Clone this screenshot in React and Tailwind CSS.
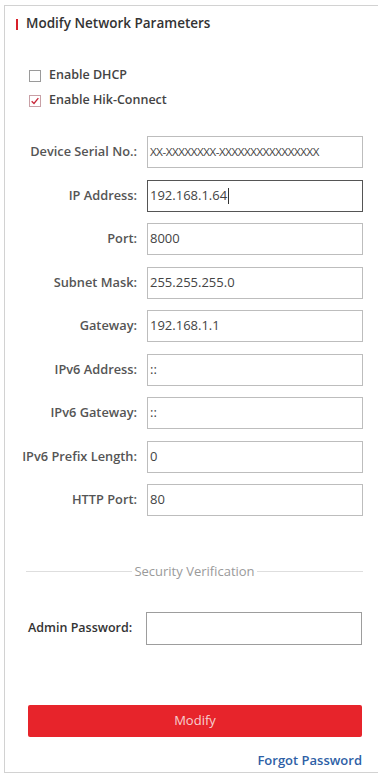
import React from 'react';

const fields = [
  { label: 'Device Serial No.:', value: 'XX-XXXXXXXX-XXXXXXXXXXXXXXXX', small: true },
  { label: 'IP Address:', value: '192.168.1.64', focused: true },
  { label: 'Port:', value: '8000' },
  { label: 'Subnet Mask:', value: '255.255.255.0' },
  { label: 'Gateway:', value: '192.168.1.1' },
  { label: 'IPv6 Address:', value: '::' },
  { label: 'IPv6 Gateway:', value: '::' },
  { label: 'IPv6 Prefix Length:', value: '0' },
  { label: 'HTTP Port:', value: '80' },
];

const Checkbox = ({ checked, label }) => (
  <div className="flex items-center h-[25px]">
    <div
      className={`w-[12px] h-[12px] border flex items-center justify-center ${
        checked ? 'border-[#c8a0a6]' : 'border-[#9a9a9a]'
      }`}
    >
      {checked && (
        <svg viewBox="0 0 12 12" className="w-[10px] h-[10px]">
          <path d="M2 6.2 L4.8 9 L10 2.6" fill="none" stroke="#c8283a" strokeWidth="1.6" />
        </svg>
      )}
    </div>
    <span className="ml-[8px] text-[12.5px] font-semibold text-[#444]">{label}</span>
  </div>
);

export default function App() {
  return (
    <div className="bg-white w-[378px] h-[776px] pt-[5px] pl-[4px]" style={{ fontFamily: '"Open Sans", "Liberation Sans", sans-serif' }}>
      <div className="h-[768px] border-l border-t border-b border-[#d2d2d2] flex flex-col">
        {/* header */}
        <div className="flex items-center pt-[10px] pl-[11px] h-[26px]">
          <div className="w-[2px] h-[11px] bg-[#d8202a]" />
          <span className="ml-[8px] text-[13.5px] font-semibold text-[#333] leading-none">
            Modify Network Parameters
          </span>
        </div>

        <div className="mt-[31px] pl-[24px]">
          <Checkbox label="Enable DHCP" />
          <Checkbox label="Enable Hik-Connect" checked />
        </div>

        {/* fields */}
        <div className="mt-[23px] flex flex-col gap-[11.5px]">
          {fields.map((f) => (
            <div key={f.label} className="flex items-center">
              <div className="w-[132px] text-right text-[12.8px] font-semibold text-[#555] whitespace-nowrap">
                {f.label}
              </div>
              <div
                className={`ml-[10px] w-[216px] h-[32px] border bg-white flex items-center pl-[2px] overflow-hidden ${
                  f.focused ? 'border-[#555]' : 'border-[#bdbdbd]'
                }`}
              >
                <span
                  className={`whitespace-nowrap text-[#444] ${
                    f.small ? 'text-[11.5px] tracking-[-0.4px]' : 'text-[13px]'
                  }`}
                >
                  {f.value}
                </span>
                {f.focused && <span className="w-px h-[16px] bg-[#333] ml-px" />}
              </div>
            </div>
          ))}
        </div>

        {/* security verification */}
        <div className="mt-[46px] ml-[21px] w-[337px] flex items-center">
          <div className="flex-1 h-px bg-[#dedede]" />
          <span className="px-[2px] text-[13px] text-[#9a9a9a]">Security Verification</span>
          <div className="flex-1 h-px bg-[#dedede]" />
        </div>

        <div className="mt-[30px] flex items-center pl-[23px]">
          <div className="w-[108px] text-[12.5px] font-semibold text-[#333] whitespace-nowrap">Admin Password:</div>
          <div className="ml-[10px] w-[216px] h-[33px] border border-[#9d9d9d] bg-white" />
        </div>

        <button className="mt-[60px] ml-[23px] w-[334px] h-[32px] bg-[#e7242b] rounded-[2px] text-[13px] text-[#f6d0d0]">
          Modify
        </button>

        <div className="mt-[14px] w-[357px] text-right text-[13px] font-semibold text-[#2e5fa6]">
          Forgot Password
        </div>
      </div>
    </div>
  );
}
